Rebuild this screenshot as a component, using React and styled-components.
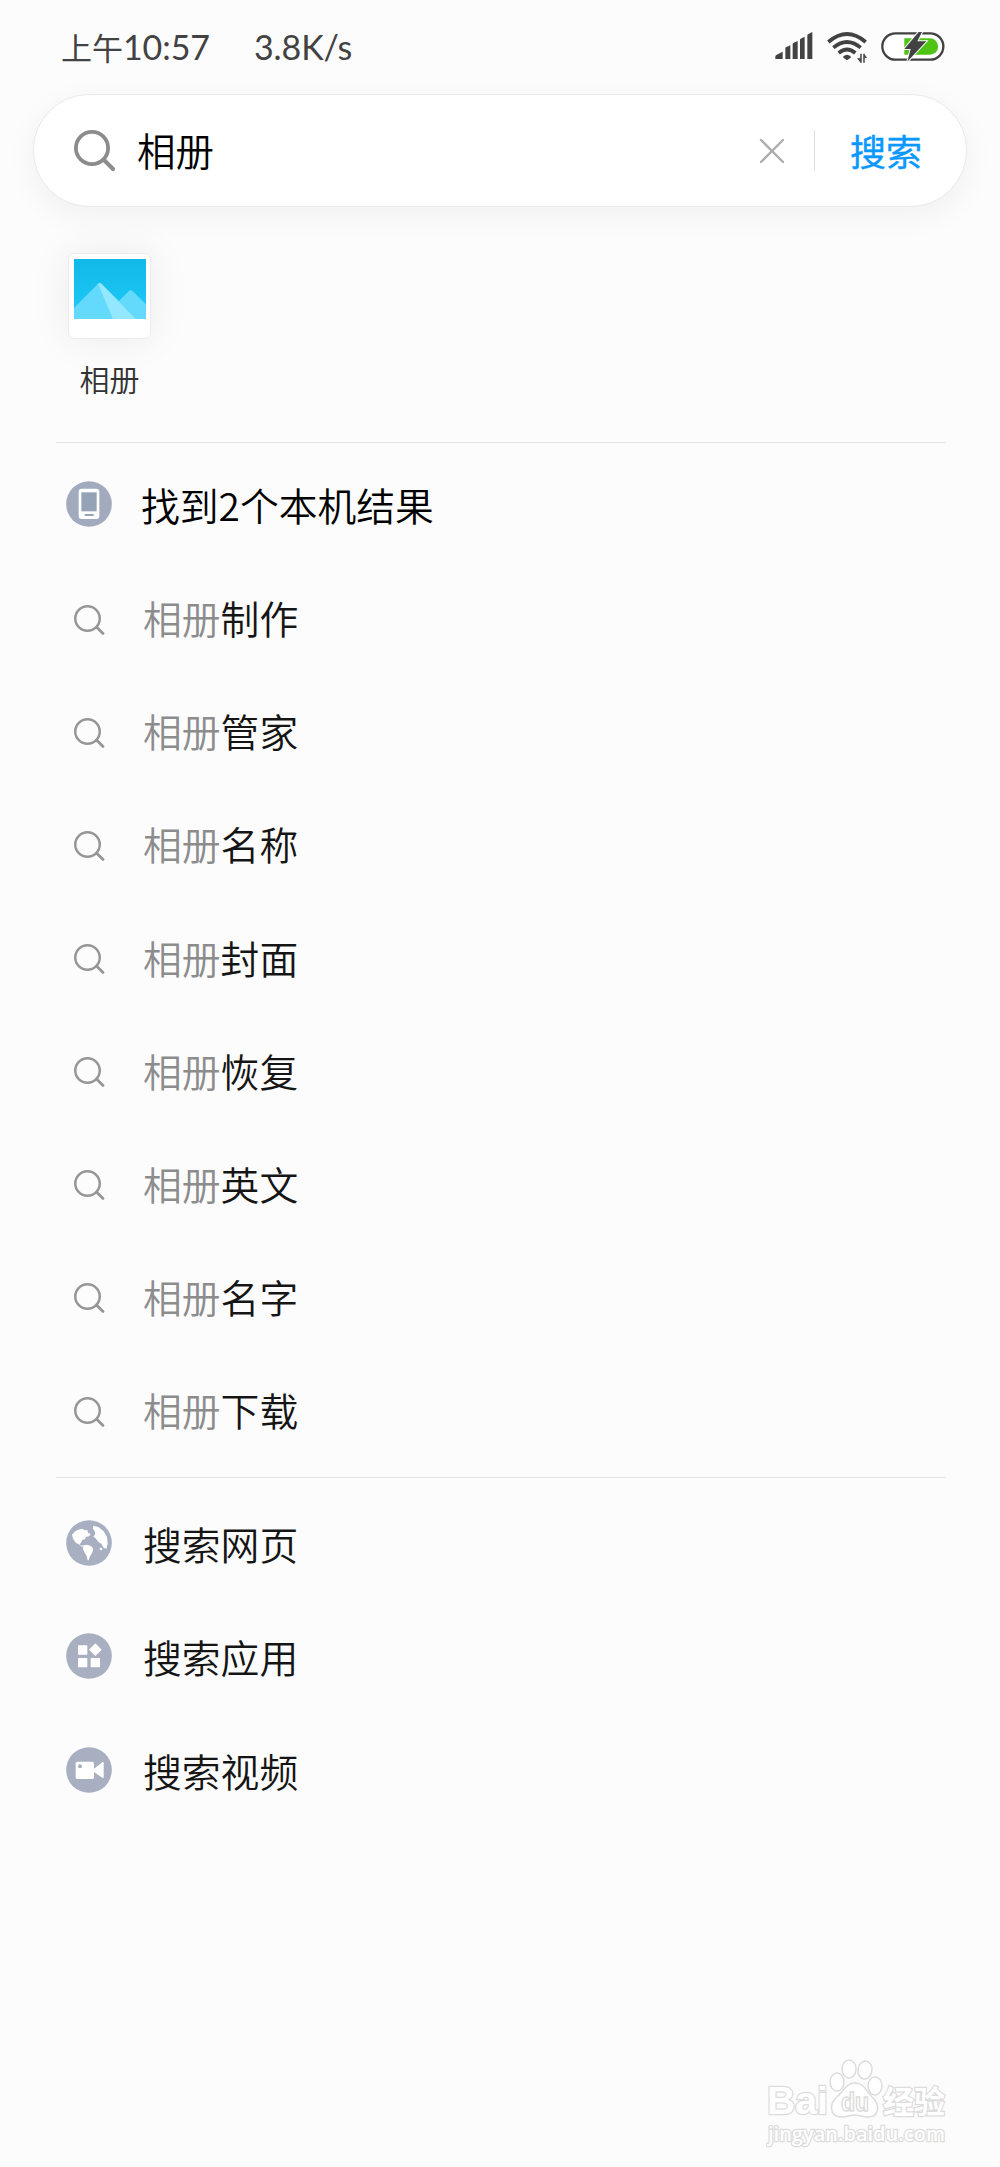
import styled, { createGlobalStyle } from "styled-components";

const GlobalStyle = createGlobalStyle`
    * {
        box-sizing: border-box;
    }
    body {
        background: #fcfcfc;
        font-family: "Noto Sans CJK SC", "Noto Sans", sans-serif;
        margin: 0;
    }
    h1, p, ul {
        font-weight: 400;
        margin: 0;
        padding: 0;
    }
    svg {
        display: block;
        flex-shrink: 0;
    }
`

const Screen = styled.div`
    background: #fcfcfc;
    display: flex;
    flex-direction: column;
    height: 2167px;
    overflow: hidden;
    width: 1000px;
`

const StatusContainer = styled.header`
    align-items: center;
    color: #424242;
    display: flex;
    height: 94px;
    line-height: 40px;
    padding: 0 55px 0 61px;

    .status__hora {
        font-size: 31px;
        white-space: nowrap;
        width: 193px;
    }
    .status__numeros {
        font-family: Lato, sans-serif;
        font-size: 34px;
        letter-spacing: -0.1px;
    }
    .status__icones {
        display: flex;
        gap: 14px;
        margin-left: auto;
    }
`

const SearchBar = styled.div`
    align-items: center;
    background: #ffffff;
    border: 1px solid #e9e9e9;
    border-radius: 56px;
    box-shadow: 0 8px 32px rgba(0, 0, 0, 0.05);
    display: flex;
    flex-shrink: 0;
    height: 113px;
    margin: 0 33px 0 33px;
    padding: 0 44px 0 40px;
`

const SearchText = styled.p`
    color: #000000;
    flex: 1;
    font-size: 38.5px;
    font-weight: 350;
    line-height: 56px;
    margin: -4px 0 0 21px;
`

const SearchButton = styled.button`
    background: none;
    border: none;
    border-left: 1px solid #dedede;
    color: #0a98ff;
    font-family: inherit;
    font-size: 36px;
    font-weight: 400;
    height: 41px;
    line-height: 36px;
    margin-left: 29px;
    padding: 0 0 2px 35px;
    -webkit-text-stroke: 0.4px #0a98ff;
`

const AppResult = styled.div`
    align-items: center;
    display: flex;
    flex-direction: column;
    height: 189px;
    margin: 46px 0 0 68px;
    width: 83px;
`

const AppIcon = styled.div`
    background: #ffffff;
    border: 1px solid #ececec;
    border-radius: 6px;
    box-shadow: 0 0 42px rgba(0, 0, 0, 0.07);
    flex-shrink: 0;
    height: 86px;
    padding: 5px;
    width: 83px;
`

const AppName = styled.p`
    color: #333333;
    font-size: 30px;
    font-weight: 350;
    line-height: 44px;
    margin-top: 17px;
    white-space: nowrap;
`

const Divider = styled.hr`
    border: none;
    border-top: 1px solid #e4e4e4;
    flex-shrink: 0;
    margin: ${({ $gap }) => $gap || 0}px 54px 0 56px;
    width: 890px;
`

const List = styled.ul`
    display: flex;
    flex-direction: column;
    list-style: none;
    padding-top: ${({ $top }) => $top}px;
`

const Row = styled.li`
    align-items: center;
    color: ${({ $title }) => ($title ? "#000000" : "#151515")};
    display: flex;
    font-size: 38.8px;
    font-weight: 350;
    height: ${({ $height }) => $height || 113.14}px;
    line-height: 56px;
    padding-left: 65px;

    .row__texto {
        margin: -5px 0 0 ${({ $title }) => ($title ? 29 : 31)}px;
        white-space: nowrap;
    }
    .row__termo {
        color: #8c8c8c;
    }
`

const IconBox = styled.span`
    display: flex;
    justify-content: center;
    padding-bottom: ${({ $up }) => $up || 0}px;
    padding-left: ${({ $right }) => $right || 0}px;
    padding-top: ${({ $down }) => $down || 0}px;
    width: 47px;
`

const Watermark = styled.footer`
    margin: auto 46px 15px auto;
`

const sugestoes = ["制作", "管家", "名称", "封面", "恢复", "英文", "名字", "下载"]

function Signal() {
    return (
        <svg width="38" height="28" viewBox="77 64 114 84" fill="#424242">
            <path d="M78 148v-7q0-3 3-5l19-10v22zM108 148v-32q0-2 2-3l13-6v41zM130 148v-45q0-2 2-3l13-6v54zM152 148v-58q0-2 2-3l12-6v67zM174 148v-71q0-2 2-3l13-7v81z" />
        </svg>
    )
}

function Wifi() {
    return (
        <svg width="40" height="32" viewBox="232 64 120 96" fill="none" stroke="#424242" strokeWidth="11">
            <path d="M236 97Q292 49 348 97M251 114Q292 80 333 114M267 130Q292 109 317 130" />
            <path d="M281 140q11-9 22 0v4l-11 8-11-8z" fill="#424242" stroke="none" />
            <path d="M334 132v27M343 132v27" strokeWidth="4.5" />
            <path d="M322 146h11v13zM344 132v13h8z" fill="#424242" stroke="none" />
        </svg>
    )
}

function Battery() {
    return (
        <svg width="64" height="30" viewBox="393 62 192 90">
            <rect x="397" y="69" width="183" height="79" rx="39.5" fill="#ffffff" stroke="#424242" strokeWidth="7" />
            <path d="M463 84h77a24.500 24.500 0 0 1 0 49h-77z" fill="#4fc414" />
            <path d="M506 65l-43 51h19l-10 38 57-61h-27l14-28z" fill="#424242" stroke="#fcfcfc" strokeWidth="6" paintOrder="stroke" />
        </svg>
    )
}

function Lupa({ size, color, stroke, circle, handle }) {
    return (
        <svg width={size} height={size} viewBox={`0 0 ${size} ${size}`} fill="none" stroke={color}>
            <circle cx={circle} cy={circle} r={circle - stroke / 2} strokeWidth={stroke} />
            <path d={handle} strokeWidth={stroke + 0.3} strokeLinecap="round" />
        </svg>
    )
}

function Fotos() {
    return (
        <svg width="72" height="60" viewBox="0 0 216 180">
            <defs>
                <linearGradient id="ceu" x2="0" y2="1">
                    <stop stopColor="#10b9e8" />
                    <stop offset="1" stopColor="#20caf8" />
                </linearGradient>
            </defs>
            <path d="M0 0h216v180H0z" fill="url(#ceu)" />
            <path d="M0 147L71 75q6-5 12 0l52 51 29-29q6-6 12 0l40 39v44H0z" fill="#63dafb" />
            <path d="M72 74q6-4 11 1l102 105h-68z" fill="#93e7ff" />
        </svg>
    )
}

function Badge({ children, color = "#a7afc0" }) {
    return (
        <svg width="46" height="46" viewBox="0 0 138 138" fill="#ffffff">
            <circle cx="69" cy="69" r="68.500" fill={color} />
            {children}
        </svg>
    )
}

function Celular() {
    return (
        <Badge color="#a1abbd">
            <rect x="38" y="23" width="62" height="91" rx="9" />
            <path d="M46 34h46v57H46z" fill="#96a3b6" />
            <rect x="55" y="99" width="29" height="6" rx="3" fill="#96a3b6" />
        </Badge>
    )
}

function Globo() {
    return (
        <Badge>
            <path d="M18 44L28 33l13-5 9-1 6 4 8-1 2 8 8 4-5 7-9 2-3 7-8 1-3 8-5 6 3 4 7-1 1 4-8-1-6-7-8-3-9-13z" />
            <path d="M52 76l11-2 12 4 7 9-4 13-6 9-4 12h-3l-4-15-5-7-5-12z" />
            <path d="M81 17l16 4 16 13 10 17 2 20-4 16-8-4-7-12-9-5-8-11-7-5 6-8-2-9-5-6z" />
            <circle cx="105" cy="87" r="4" />
        </Badge>
    )
}

function Apps() {
    return (
        <Badge>
            <rect x="36" y="37" width="28" height="28" rx="2" />
            <rect x="36" y="75" width="28" height="28" rx="2" />
            <rect x="74" y="75" width="28" height="28" rx="2" />
            <rect x="74.500" y="36.500" width="27" height="27" rx="2" transform="rotate(45 88 50)" />
        </Badge>
    )
}

function Video() {
    return (
        <Badge>
            <rect x="29" y="44" width="55" height="52" rx="5" />
            <path d="M83 66l27-21q3-1 3 2v44q0 3-3 2L83 74z" />
            <circle cx="42" cy="58" r="6" fill="#a7afc0" />
        </Badge>
    )
}

function Logo() {
    return (
        <svg width="188" height="94" viewBox="0 0 188 94" fill="#ffffff" stroke="#dcdcdc" strokeWidth="1.500">
            <text x="1" y="56" fontFamily="Liberation Sans, sans-serif" fontSize="39" fontWeight="700" strokeWidth="2.500" paintOrder="stroke" textLength="61" lengthAdjust="spacingAndGlyphs">Bai</text>
            <ellipse cx="71" cy="24" rx="7" ry="9" />
            <ellipse cx="83" cy="11" rx="7" ry="9" />
            <ellipse cx="99" cy="12" rx="7" ry="9" transform="rotate(8 99 12)" />
            <ellipse cx="109" cy="28" rx="7" ry="9" />
            <path d="M89 25c9 0 11 8 17 14 8 7 8 20-4 20-6 0-8-2-13-2s-8 2-13 2c-13 0-13-13-5-20 7-6 9-14 18-14z" />
            <text x="75" y="53" fontFamily="Liberation Sans, sans-serif" fontSize="25" fontWeight="700" textLength="28" lengthAdjust="spacingAndGlyphs">du</text>
            <text x="117" y="55" fontFamily="Noto Sans CJK SC, sans-serif" fontSize="31" fontWeight="700" strokeWidth="2.500" paintOrder="stroke">经验</text>
            <text x="2" y="83" fontFamily="Open Sans, sans-serif" fontSize="20" fontWeight="600" strokeWidth="2.500" paintOrder="stroke" textLength="177" lengthAdjust="spacingAndGlyphs">jingyan.baidu.com</text>
        </svg>
    )
}

function StatusBar() {
    return (
        <StatusContainer>
            <span className="status__hora">上午<span className="status__numeros">10:57</span></span>
            <span className="status__numeros">3.8K/s</span>
            <div className="status__icones">
                <Signal />
                <Wifi />
                <Battery />
            </div>
        </StatusContainer>
    )
}

function App() {
    return (
        <Screen>
            <GlobalStyle />
            <StatusBar />
            <SearchBar>
                <Lupa size={42} color="#8c8c8c" stroke={3.8} circle={18} handle="M31 31L39 39" />
                <SearchText>相册</SearchText>
                <svg width="26" height="26" viewBox="0 0 26 26" stroke="#adadad" strokeWidth="2.400" strokeLinecap="round">
                    <path d="M2 2L24 24M24 2L2 24" />
                </svg>
                <SearchButton>搜索</SearchButton>
            </SearchBar>
            <AppResult>
                <AppIcon>
                    <Fotos />
                </AppIcon>
                <AppName>相册</AppName>
            </AppResult>
            <Divider />
            <List $top={7}>
                <Row $title>
                    <IconBox $up={5}><Celular /></IconBox>
                    <span className="row__texto">找到2个本机结果</span>
                </Row>
                {sugestoes.map((item) => (
                    <Row key={item}>
                        <IconBox $down={1} $right={2}>
                            <Lupa size={31} color="#969696" stroke={2.5} circle={13.5} handle="M23 22.500L29 28.500" />
                        </IconBox>
                        <span className="row__texto"><span className="row__termo">相册</span>{item}</span>
                    </Row>
                ))}
            </List>
            <Divider $gap={9} />
            <List $top={10}>
                <Row $height={113.800}>
                    <IconBox $up={5}><Globo /></IconBox>
                    <span className="row__texto">搜索网页</span>
                </Row>
                <Row $height={113.800}>
                    <IconBox $up={5}><Apps /></IconBox>
                    <span className="row__texto">搜索应用</span>
                </Row>
                <Row $height={113.800}>
                    <IconBox $up={5}><Video /></IconBox>
                    <span className="row__texto">搜索视频</span>
                </Row>
            </List>
            <Watermark>
                <Logo />
            </Watermark>
        </Screen>
    )
}

export default App
